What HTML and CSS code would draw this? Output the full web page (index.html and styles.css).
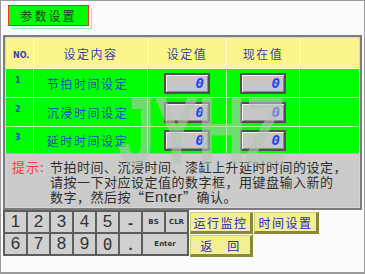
FILE: index.html
```html
<!DOCTYPE html>
<html lang="zh-CN">
<head>
    <meta charset="UTF-8">
    <meta name="viewport" content="width=device-width, initial-scale=1.0">
    <title>参数设置</title>
    <link rel="stylesheet" href="styles.css">
</head>
<body>

<div class="screen">
    <!-- Titulo -->
    <div class="top">
        <div class="title">参数设置</div>
    </div>

    <!-- Tabela de parametros -->
    <div class="panel">
        <div class="grid">
            <div class="cell head num">NO.</div>
            <div class="cell head">设定内容</div>
            <div class="cell head">设定值</div>
            <div class="cell head">现在值</div>
            <div class="cell head last"></div>

            <div class="cell num row-num">1</div>
            <div class="cell name">节拍时间设定</div>
            <div class="cell"><div class="value">0</div></div>
            <div class="cell"><div class="value">0</div></div>
            <div class="cell last"></div>

            <div class="cell num row-num">2</div>
            <div class="cell name">沉浸时间设定</div>
            <div class="cell"><div class="value">0</div></div>
            <div class="cell"><div class="value">0</div></div>
            <div class="cell last"></div>

            <div class="cell num row-num end">3</div>
            <div class="cell name end">延时时间设定</div>
            <div class="cell end"><div class="value">0</div></div>
            <div class="cell end"><div class="value">0</div></div>
            <div class="cell last end"></div>
        </div>

        <div class="hint">
            <span class="hint-label">提示:</span>
            <p class="hint-text">节拍时间、沉浸时间、漆缸上升延时时间的设定，<br>请按一下对应设定值的数字框，用键盘输入新的<br>数字，然后按“<span class="en">Enter</span>”确认。</p>
        </div>
    </div>

    <!-- Teclado e botoes -->
    <div class="bottom">
        <div class="keypad">
            <div class="key">1</div>
            <div class="key">2</div>
            <div class="key">3</div>
            <div class="key">4</div>
            <div class="key">5</div>
            <div class="key sym">-</div>
            <div class="key small">BS</div>
            <div class="key small">CLR</div>
            <div class="key">6</div>
            <div class="key">7</div>
            <div class="key">8</div>
            <div class="key">9</div>
            <div class="key zero">0</div>
            <div class="key sym">.</div>
            <div class="key small wide">Enter</div>
        </div>
        <div class="actions">
            <div class="btn">运行监控</div>
            <div class="btn">时间设置</div>
            <div class="btn">返　回</div>
        </div>
    </div>

    <div class="watermark">JYHZ</div>
</div>

</body>
</html>
```

FILE: styles.css
```css
body {
    margin: 0;
    background-color: #fff;
    font-family: "Noto Sans CJK SC", "DejaVu Sans", sans-serif;
}

.screen {
    position: relative;
    width: 365px;
    height: 274px;
    box-sizing: border-box;
    border: 1px solid #9a9a9a;
    border-bottom-width: 2px;
    background-color: #fbfbfb;
    overflow: hidden;
}

.top {
    height: 34px;
    box-sizing: border-box;
    padding: 4px 0 0 7px;
}

.title {
    width: 81px;
    height: 21px;
    box-sizing: border-box;
    border: 1px solid #ff2a2a;
    background-color: #00ff00;
    color: #1c3a1c;
    font-size: 12px;
    letter-spacing: 2px;
    line-height: 19px;
    text-align: center;
    box-shadow: 2px 2px 0 0 #fff, 3px 3px 0 0 #9ce89c;
}

.panel {
    margin: 0 2px;
    border: 2px solid #7c7c7c;
    padding: 1px;
    background-color: #d6d6d6;
}

.grid {
    display: grid;
    grid-template-columns: 28px 114px 79px 73px 59px;
    grid-template-rows: 31px 29px 29px 26px;
    background-color: #00ff00;
}

.cell {
    display: flex;
    align-items: center;
    justify-content: center;
    border-right: 1px solid #b8ffb0;
    border-bottom: 1px solid #b8ffb0;
    color: #2448c4;
    font-size: 12px;
    letter-spacing: 1.6px;
}

.cell.head {
    background-color: #fcf48c;
    border-color: #fffbd0;
    color: #3444a8;
    letter-spacing: 1.5px;
    padding-top: 1px;
}

.cell.last {
    border-right: none;
}

.cell.end {
    border-bottom: none;
}

.cell.num {
    justify-content: flex-start;
    padding-left: 7px;
    font-family: "DejaVu Sans", sans-serif;
    font-size: 8px;
    font-weight: bold;
    letter-spacing: 0;
    padding-top: 4px;
}

.cell.row-num {
    padding-left: 9px;
    padding-top: 0;
    padding-bottom: 6px;
}

.cell.name {
    padding-right: 6px;
}

.value {
    width: 46px;
    height: 21px;
    box-sizing: border-box;
    border: 2px solid #505050;
    border-radius: 1px;
    background-color: #c6c6c6;
    box-shadow: inset 1px 1px 0 #f2f2f2, inset -1px -1px 0 #8a8a8a;
    color: #2040ff;
    font-family: "DejaVu Sans Mono", monospace;
    font-style: italic;
    font-weight: bold;
    font-size: 14px;
    line-height: 17px;
    text-align: right;
    padding-right: 4px;
    letter-spacing: 0;
}

.hint {
    display: flex;
    height: 54px;
    box-sizing: border-box;
    padding: 5px 0 0 6px;
    background-color: #cbcbcb;
    border-top: 1px solid #b0b0b0;
}

.hint-label {
    width: 38px;
    color: #ff3c3c;
    font-size: 13px;
    line-height: 15px;
    letter-spacing: 1px;
}

.hint-text {
    margin: 0;
    color: #2e2e2e;
    font-size: 13px;
    line-height: 15px;
    letter-spacing: 0.5px;
}

.hint-text .en {
    font-family: "Liberation Sans", sans-serif;
    font-size: 15px;
    letter-spacing: 0.5px;
}

.bottom {
    display: flex;
    align-items: flex-start;
    padding-left: 2px;
}

.keypad {
    display: grid;
    grid-template-columns: repeat(8, 21px);
    grid-template-rows: 20px 20px;
    gap: 2px;
    padding: 2px;
    background-color: #5e5e5e;
}

.key {
    display: flex;
    align-items: center;
    justify-content: center;
    background-color: #d0d0d0;
    color: #333;
    font-family: "Liberation Sans", sans-serif;
    font-size: 17px;
}

.key.zero {
    font-family: "DejaVu Sans Mono", monospace;
    font-size: 16px;
}

.key.sym {
    font-weight: bold;
    font-size: 15px;
}

.key.small {
    font-family: "DejaVu Sans", sans-serif;
    font-size: 7px;
    font-weight: bold;
}

.key.wide {
    grid-column: span 2;
}

.actions {
    display: grid;
    grid-template-columns: 63px 65px;
    grid-template-rows: 22px 22px;
    gap: 1px;
    margin-left: 1px;
    margin-top: 2px;
}

.btn {
    display: flex;
    align-items: center;
    justify-content: center;
    box-sizing: border-box;
    background-color: #f3ef94;
    border: 1px solid #d2ce78;
    border-right: 3px solid #8a883a;
    border-bottom: 3px solid #8a883a;
    color: #2626cc;
    font-size: 12px;
    letter-spacing: 1.5px;
}

.watermark {
    position: absolute;
    left: 117px;
    top: 82px;
    font-family: "Liberation Sans", sans-serif;
    font-weight: bold;
    font-size: 96px;
    line-height: 96px;
    letter-spacing: -2px;
    color: rgba(180, 196, 180, 0.6);
    transform: scaleX(0.7);
    transform-origin: left top;
    pointer-events: none;
}
```
